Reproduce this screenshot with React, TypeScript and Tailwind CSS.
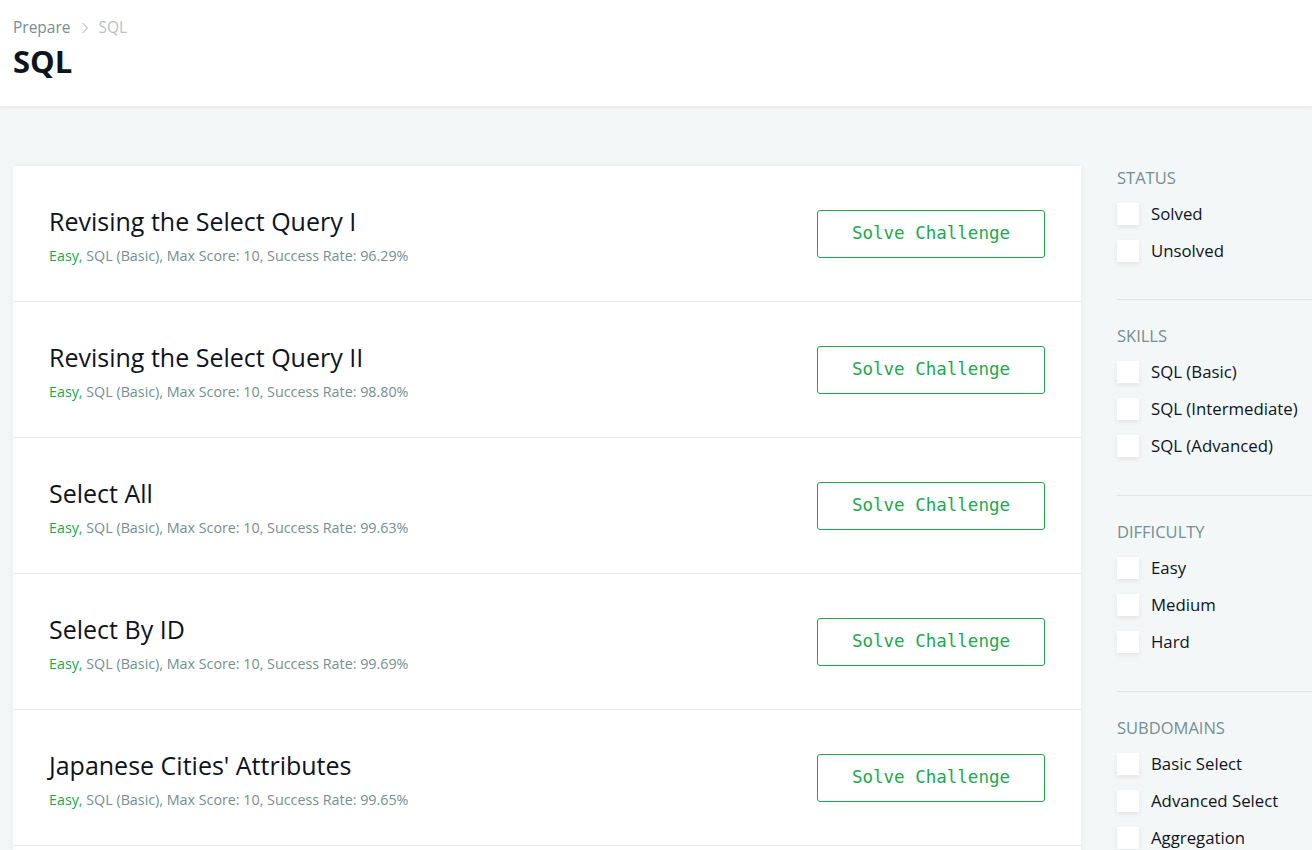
import React from "react";

const challenges = [
  { title: "Revising the Select Query I", rate: "96.29%" },
  { title: "Revising the Select Query II", rate: "98.80%" },
  { title: "Select All", rate: "99.63%" },
  { title: "Select By ID", rate: "99.69%" },
  { title: "Japanese Cities' Attributes", rate: "99.65%" },
  { title: "Japanese Cities' Names", rate: "99.56%" },
];

const filters = [
  { name: "Status", items: ["Solved", "Unsolved"] },
  { name: "Skills", items: ["SQL (Basic)", "SQL (Intermediate)", "SQL (Advanced)"] },
  { name: "Difficulty", items: ["Easy", "Medium", "Hard"] },
  { name: "Subdomains", items: ["Basic Select", "Advanced Select", "Aggregation", "Basic Join"] },
];

function Chevron() {
  return (
    <svg width="8" height="12" viewBox="0 0 8 12" className="mx-[10px]" fill="none">
      <path d="M1.5 1 L6.5 6 L1.5 11" stroke="#c2ccd1" strokeWidth="1.2" />
    </svg>
  );
}

export default function App() {
  return (
    <div className="h-[850px] overflow-hidden bg-[#f3f7f7] font-['Open_Sans',sans-serif]">
      {/* Page header */}
      <header className="bg-white px-[13px] pt-4 pb-[27px] shadow-[0_1px_2px_rgba(0,0,0,0.06)] border-b border-[#e9eef0]">
        <nav className="flex h-6 items-center text-[15.5px] text-[#738f93]">
          <span>Prepare</span>
          <Chevron />
          <span className="text-[#b3c2c6]">SQL</span>
        </nav>
        <h1 className="mt-[3px] text-[31px] leading-9 font-bold text-[#0e141e]">SQL</h1>
      </header>

      <div className="flex gap-9 pt-[59px] pl-[13px]">
        {/* Challenge list */}
        <main className="w-[1068px] shrink-0 bg-white shadow-[0_0_6px_rgba(0,0,0,0.06)]">
          {challenges.map((c) => (
            <div
              key={c.title}
              className="flex h-[136px] items-center justify-between border-b border-[#e7eced] pl-9 pr-9"
            >
              <div className="pt-[4px]">
                <h4 className="text-[25px] leading-8 text-[#0e141e]">{c.title}</h4>
                <p className="mt-[9px] text-[14.3px] leading-5 text-[#738f93]">
                  <span className="text-[#1ba94c]">Easy, </span>
                  SQL (Basic), Max Score: 10, Success Rate: {c.rate}
                </p>
              </div>
              <button className="h-12 w-[228px] rounded-[3px] border border-[#1ba94c] font-['DejaVu_Sans_Mono',monospace] text-[17.5px] text-[#1ba94c]">
                Solve Challenge
              </button>
            </div>
          ))}
        </main>

        {/* Filters */}
        <aside className="flex-1">
          {filters.map((f, i) => (
            <section
              key={f.name}
              className={`border-b border-[#dfe5e7] ${i === 0 ? "pb-[30px]" : "pt-6 pb-[31px]"}`}
            >
              <h3 className="mb-[5px] h-6 text-[16.5px] leading-6 uppercase text-[#738f93]">{f.name}</h3>
              {f.items.map((item) => (
                <label key={item} className="flex h-[37px] items-center gap-3">
                  <span className="h-[22px] w-[22px] bg-white shadow-[0_2px_5px_rgba(0,0,0,0.08)]" />
                  <span className="whitespace-nowrap text-[16.8px] text-[#0e141e]">{item}</span>
                </label>
              ))}
            </section>
          ))}
        </aside>
      </div>
    </div>
  );
}
